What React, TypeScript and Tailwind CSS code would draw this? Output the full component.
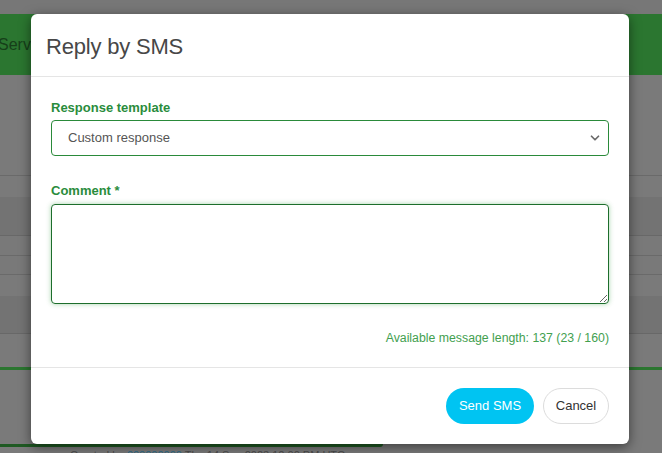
import { ChevronDown } from 'lucide-react';

const font = { fontFamily: '"Liberation Sans", Arial, sans-serif' };

function Backdrop() {
    return (
        <div>
            <div className="h-[14px] bg-[#777777]" />
            <div className="h-[61px] bg-[#2b7630] flex items-center">
                <span className="text-[16px] text-[#163f19] -ml-[2px]">Servic</span>
            </div>
            <div className="h-[101px] bg-[#7a7a7a] border-b border-[#6a6a6a]" />
            <div className="h-[21px] bg-[#7a7a7a]" />
            <div className="h-[39px] bg-[#737373] border-b border-[#686868]" />
            <div className="h-[20px] bg-[#797979] border-b border-[#6a6a6a]" />
            <div className="h-[19px] bg-[#797979] border-b border-[#6a6a6a]" />
            <div className="h-[21px] bg-[#7a7a7a]" />
            <div className="h-[38px] bg-[#737373] border-b border-[#686868]" />
            <div className="h-[33px] bg-[#7a7a7a]" />
            <div className="h-[3px] bg-[#2b7630]" />
            <div className="h-[74px] bg-[#7a7a7a]" />
            <div className="h-[3px] w-[383px] bg-[#1f5a23] rounded-br-md" />
            <div className="pl-[70px] text-[11px] text-[#4a4a4a] leading-none pt-[3px]">
                Created by <span className="text-[#2b6a88]">000000000</span> Thu 14 Sep 2023 12:00 PM UTC
            </div>
        </div>
    );
}

export default function App() {
    return (
        <div className="relative w-[662px] h-[453px] overflow-hidden bg-[#7a7a7a]" style={font}>
            <Backdrop />

            <div className="absolute left-[31px] top-[14px] w-[598px] bg-white rounded-md shadow-[0_3px_12px_rgba(0,0,0,0.5)]">
                <div className="h-[63px] px-[15px] flex items-center border-b border-[#e5e5e5]">
                    <h1 className="text-[22px] text-[#474747] font-light tracking-[-0.2px] mt-[2px]">Reply by SMS</h1>
                </div>

                <div className="px-[20px] pt-[23px] pb-[22px] border-b border-[#e5e5e5]">
                    <label className="block text-[13px] font-bold text-[#2a8c3c] leading-[16px]">Response template</label>
                    <div className="mt-[4px] h-[36px] rounded border border-[#2a8a3a] flex items-center justify-between pl-[16px] pr-[6px]">
                        <span className="text-[13px] text-[#555555]">Custom response</span>
                        <ChevronDown size={14} strokeWidth={3} className="text-[#6a6a6a]" />
                    </div>

                    <label className="block mt-[27px] text-[13px] font-bold text-[#2a8c3c] leading-[16px]">Comment *</label>
                    <textarea
                        className="block mt-[5px] w-full h-[100px] rounded border border-[#1d6e2c] shadow-[0_0_5px_rgba(60,160,70,0.45)] outline-none resize-y"
                    />

                    <p className="mt-[27px] text-right text-[12.3px] text-[#43a04f] leading-[14px]">
                        Available message length: 137 (23 / 160)
                    </p>
                </div>

                <div className="h-[76px] px-[20px] flex items-center justify-end gap-[9px]">
                    <button className="h-[36px] w-[88px] rounded-full bg-[#00c4f2] text-white text-[13px]">Send SMS</button>
                    <button className="h-[36px] w-[66px] rounded-full bg-white border border-[#dcdcdc] text-[#333333] text-[13px]">Cancel</button>
                </div>
            </div>
        </div>
    );
}
